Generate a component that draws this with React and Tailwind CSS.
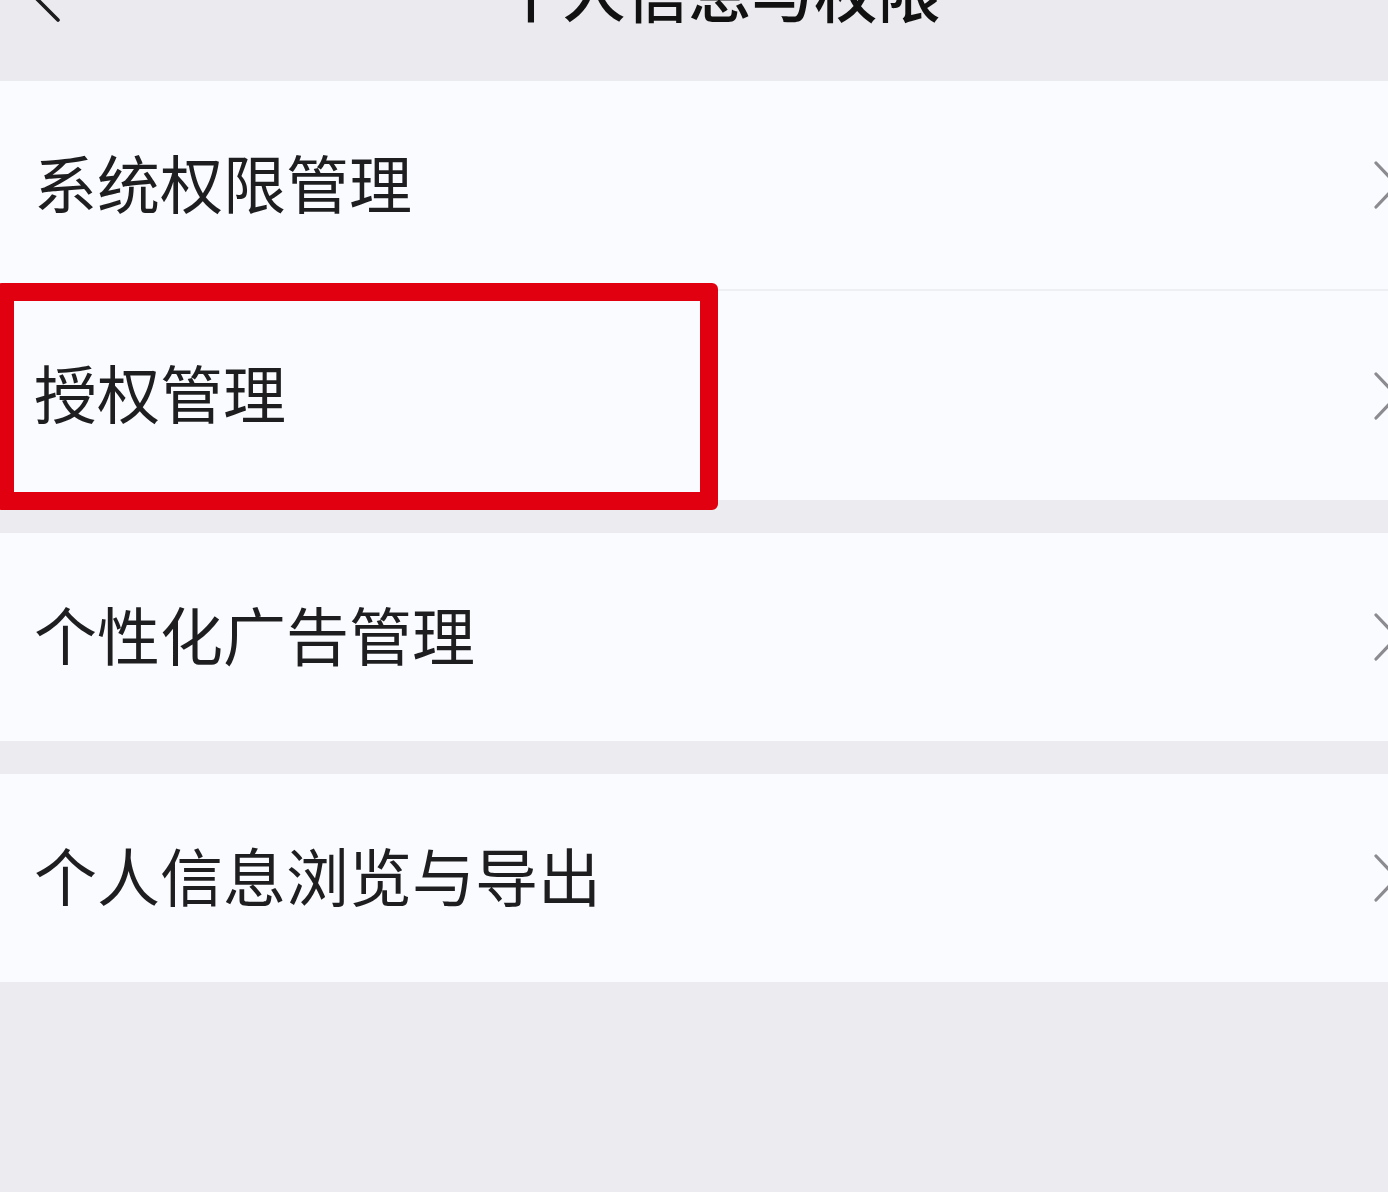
const font = { fontFamily: '"Noto Sans CJK SC", "Noto Sans", sans-serif' };

const Chevron = () => (
  <svg width="28" height="50" viewBox="0 0 28 50" className="shrink-0 -mr-[14px]">
    <path d="M3 3 L24 25 L3 47" fill="none" stroke="#8b8b90" strokeWidth="3.2" strokeLinecap="round" strokeLinejoin="round" />
  </svg>
);

const Row = ({ label, h, divider, children }) => (
  <div className={`relative flex items-center justify-between bg-[#fafbfe] pl-[34px] pr-[1px] ${h} ${divider ? "border-b-2 border-[#eeeff3]" : ""}`}>
    <span className="text-[63px] leading-none text-[#1e1e20] -mt-[10px]">{label}</span>
    <Chevron />
    {children}
  </div>
);

export default function App() {
  return (
    <div style={font} className="w-[1388px] h-[1192px] overflow-hidden bg-[#ececf0] flex flex-col">
      {/* Header */}
      <div className="relative h-[81px] shrink-0 bg-[#ebebef] flex justify-center">
        <svg width="50" height="60" viewBox="0 0 50 60" className="absolute left-[20px] -top-[38px]">
          <path d="M36 8 L12 32 L38 58" fill="none" stroke="#1c1c1e" strokeWidth="3.6" strokeLinecap="round" strokeLinejoin="round" />
        </svg>
        <h1 className="ml-[52px] -mt-[42px] text-[63px] leading-none font-medium text-[#111]">个人信息与权限</h1>
      </div>

      {/* Group 1 */}
      <div className="flex flex-col">
        <Row label="系统权限管理" h="h-[210px]" divider />
        <Row label="授权管理" h="h-[209px]">
          <div className="absolute -left-[4px] -top-[8px] w-[722px] h-[227px] border-[18px] border-[#e1000f] rounded-[6px] pointer-events-none" />
        </Row>
      </div>

      <div className="h-[33px] shrink-0" />

      <Row label="个性化广告管理" h="h-[208px]" />

      <div className="h-[33px] shrink-0" />

      <Row label="个人信息浏览与导出" h="h-[208px]" />
    </div>
  );
}
